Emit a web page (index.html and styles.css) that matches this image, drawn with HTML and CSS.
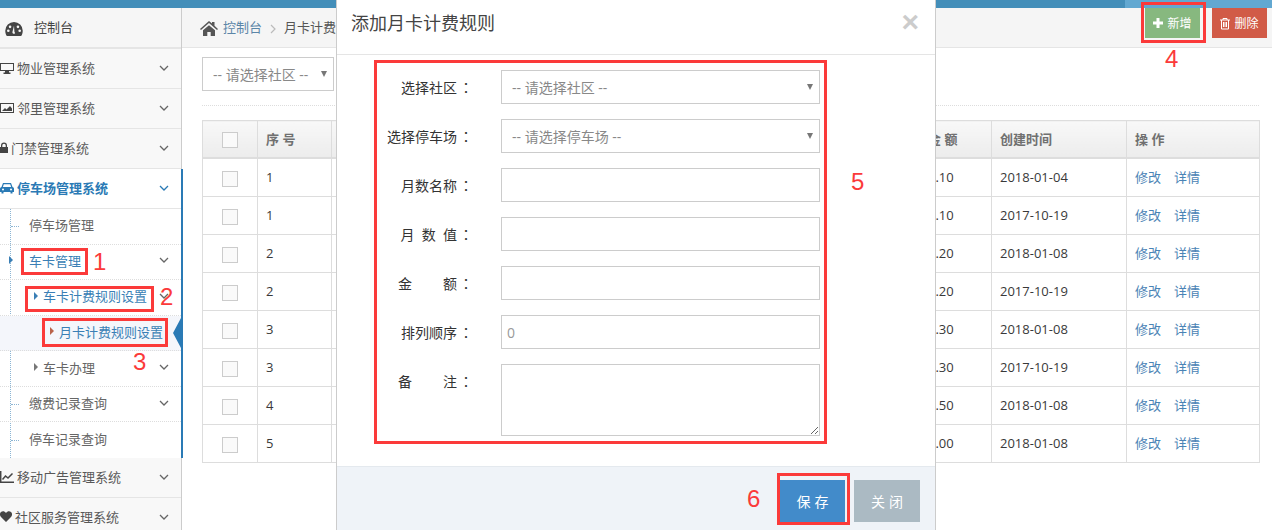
FILE: index.html
```html
<!DOCTYPE html>
<html lang="zh-CN">
<head>
  <meta charset="UTF-8">
  <meta name="viewport" content="width=device-width, initial-scale=1.0">
  <title>月卡计费规则设置</title>
  <link rel="stylesheet" href="styles.css">
</head>
<body>
  <div class="topbar">
    <div class="topbar-left"></div>
    <div class="topbar-right"></div>
  </div>

  <div class="layout">
    <aside class="sidebar">
      <div class="side-head">
        <svg class="head-icon" viewBox="0 0 20 16"><path fill="#444" fill-rule="evenodd" d="M10 0a10 10 0 0 0-10 10c0 2.300.7 4.500 1.800 6h16.400c1.100-1.500 1.800-3.700 1.800-6A10 10 0 0 0 10 0zM3.500 11.500a1.500 1.500 0 1 1 0-3 1.500 1.500 0 0 1 0 3zm2-4.500a1.500 1.500 0 1 1 0-3 1.500 1.500 0 0 1 0 3zm5.700 5.800a1.700 1.700 0 0 1-3-1.400l1.800-7 .5 7.100c.4.300.7.800.7 1.300zM14.500 7a1.500 1.500 0 1 1 0-3 1.500 1.500 0 0 1 0 3zm2 4.500a1.500 1.500 0 1 1 0-3 1.500 1.500 0 0 1 0 3z"/></svg>
        <span>控制台</span>
      </div>

      <a class="side-item" href="#">
        <svg class="icon-wide" viewBox="0 0 14 12"><path fill="#444" fill-rule="evenodd" d="M0 1h14v8H9v1.500h1.500V12h-7v-1.500H5V9H0zm1 1v6h12V2z"/></svg>
        <span>物业管理系统</span>
        <svg class="chev" viewBox="0 0 10 6"><path d="M1 1l4 4 4-4"/></svg>
      </a>
      <a class="side-item" href="#">
        <svg class="icon-wide" viewBox="0 0 14 12"><path fill="#444" fill-rule="evenodd" d="M0 1h14v10H0zm1 1v8h12V2zm1 7l3-3 1.500 1.500L10 4l2 2.500V9z"/></svg>
        <span>邻里管理系统</span>
        <svg class="chev" viewBox="0 0 10 6"><path d="M1 1l4 4 4-4"/></svg>
      </a>
      <a class="side-item" href="#">
        <svg class="icon-lock" viewBox="0 0 8 11"><path fill="#444" fill-rule="evenodd" d="M1 5V3.500a3 3 0 0 1 6 0V5h1v6H0V5zm1.300 0h3.400V3.500a1.700 1.700 0 0 0-3.400 0z"/></svg>
        <span>门禁管理系统</span>
        <svg class="chev" viewBox="0 0 10 6"><path d="M1 1l4 4 4-4"/></svg>
      </a>

      <div class="side-open">
        <a class="side-item side-item-active" href="#">
          <svg class="icon-wide" viewBox="0 0 14 12"><path fill="#2a7ab5" fill-rule="evenodd" d="M3 1h8l1.500 4c1 .3 1.500 1 1.500 2v3h-1.500v1.500h-2V10h-7v1.500h-2V10H0V7c0-1 .5-1.700 1.500-2zm.8 1.300L2.900 5h8.200l-.9-2.700zM3 6.500a1 1 0 1 0 0 2 1 1 0 0 0 0-2zm8 0a1 1 0 1 0 0 2 1 1 0 0 0 0-2z"/></svg>
          <span>停车场管理系统</span>
          <svg class="chev chev-blue" viewBox="0 0 10 6"><path d="M1 1l4 4 4-4"/></svg>
        </a>
        <ul class="tree">
          <li class="tree-row tick"><a href="#">停车场管理</a></li>
          <li class="tree-row is-blue">
            <i class="arrow arrow-l1"></i><a href="#">车卡管理</a>
            <svg class="chev" viewBox="0 0 10 6"><path d="M1 1l4 4 4-4"/></svg>
          </li>
          <li class="tree-row level-2 is-blue">
            <i class="arrow"></i><a href="#">车卡计费规则设置</a>
            <svg class="chev" viewBox="0 0 10 6"><path d="M1 1l4 4 4-4"/></svg>
          </li>
          <li class="tree-row level-3 is-blue is-current">
            <i class="arrow arrow-red"></i><a href="#">月卡计费规则设置</a>
          </li>
          <li class="tree-row level-2">
            <i class="arrow arrow-grey"></i><a href="#">车卡办理</a>
            <svg class="chev" viewBox="0 0 10 6"><path d="M1 1l4 4 4-4"/></svg>
          </li>
          <li class="tree-row tick"><a href="#">缴费记录查询</a>
            <svg class="chev" viewBox="0 0 10 6"><path d="M1 1l4 4 4-4"/></svg>
          </li>
          <li class="tree-row tick no-line"><a href="#">停车记录查询</a></li>
        </ul>
      </div>

      <a class="side-item" href="#">
        <svg class="icon-wide" viewBox="0 0 14 12"><path fill="none" stroke="#444" stroke-width="1.500" d="M.7 0v11.200H14M2.500 8.500l3-3.500 2.500 2 4.500-4.500"/></svg>
        <span>移动广告管理系统</span>
        <svg class="chev" viewBox="0 0 10 6"><path d="M1 1l4 4 4-4"/></svg>
      </a>
      <a class="side-item" href="#">
        <svg class="icon-heart" viewBox="0 0 12 11"><path fill="#444" d="M6 11L1 6C-.5 4.300-.3 2 1 1c1.500-1.200 3.700-.9 5 1 1.300-1.900 3.500-2.200 5-1 1.300 1 1.500 3.300 0 5z"/></svg>
        <span>社区服务管理系统</span>
        <svg class="chev" viewBox="0 0 10 6"><path d="M1 1l4 4 4-4"/></svg>
      </a>
    </aside>

    <main class="main">
      <div class="crumb-bar">
        <svg class="home" viewBox="0 0 18 15"><path fill="#555" d="M9 0l3 2.600V1h2.500v3.800L18 7.900l-1 1.100-8-6.900L1 9 0 7.900zM3 9.300l6-5.100 6 5.100V15h-4.300v-4H7.300v4H3z"/></svg>
        <a class="crumb-link" href="#">控制台</a>
        <svg class="crumb-sep" viewBox="0 0 6 10"><path d="M1 1l4 4-4 4"/></svg>
        <span class="crumb-now">月卡计费</span>
        <div class="crumb-btns">
          <button class="btn btn-add" type="button">
            <svg viewBox="0 0 10 10"><path fill="#fff" d="M3.500 0h3v3.500H10v3H6.500V10h-3V6.500H0v-3h3.500z"/></svg>新增
          </button>
          <button class="btn btn-del" type="button">
            <svg viewBox="0 0 10 12"><path fill="none" stroke="#fff" d="M0 2.500h10M3 2.500V1h4v1.500M1.500 2.500v9h7v-9M3.500 4.500v5M5 4.500v5M6.500 4.500v5"/></svg>删除
          </button>
        </div>
      </div>

      <div class="content">
        <div class="filter">
          <div class="select-wrap filter-select">
            <select><option>-- 请选择社区 --</option></select>
          </div>
        </div>

        <table class="grid">
          <colgroup>
            <col class="col-check"><col class="col-no"><col class="col-name"><col class="col-park"><col class="col-month"><col class="col-money"><col class="col-date"><col class="col-op">
          </colgroup>
          <thead>
            <tr>
              <th><i class="check"></i></th>
              <th>序 号</th>
              <th>月数名称</th>
              <th>停车场</th>
              <th>月数值</th>
              <th>金 额</th>
              <th>创建时间</th>
              <th>操 作</th>
            </tr>
          </thead>
          <tbody>
            <tr><td><i class="check"></i></td><td>1</td><td>一个月</td><td>一号停车场</td><td>1</td><td>0.10</td><td>2018-01-04</td><td><a href="#">修改</a><a href="#">详情</a></td></tr>
            <tr><td><i class="check"></i></td><td>1</td><td>一个月</td><td>二号停车场</td><td>1</td><td>0.10</td><td>2017-10-19</td><td><a href="#">修改</a><a href="#">详情</a></td></tr>
            <tr><td><i class="check"></i></td><td>2</td><td>两个月</td><td>一号停车场</td><td>2</td><td>0.20</td><td>2018-01-08</td><td><a href="#">修改</a><a href="#">详情</a></td></tr>
            <tr><td><i class="check"></i></td><td>2</td><td>两个月</td><td>二号停车场</td><td>2</td><td>0.20</td><td>2017-10-19</td><td><a href="#">修改</a><a href="#">详情</a></td></tr>
            <tr><td><i class="check"></i></td><td>3</td><td>三个月</td><td>一号停车场</td><td>3</td><td>0.30</td><td>2018-01-08</td><td><a href="#">修改</a><a href="#">详情</a></td></tr>
            <tr><td><i class="check"></i></td><td>3</td><td>三个月</td><td>二号停车场</td><td>3</td><td>0.30</td><td>2017-10-19</td><td><a href="#">修改</a><a href="#">详情</a></td></tr>
            <tr><td><i class="check"></i></td><td>4</td><td>半年</td><td>一号停车场</td><td>6</td><td>0.50</td><td>2018-01-08</td><td><a href="#">修改</a><a href="#">详情</a></td></tr>
            <tr><td><i class="check"></i></td><td>5</td><td>一年</td><td>一号停车场</td><td>12</td><td>1.00</td><td>2018-01-08</td><td><a href="#">修改</a><a href="#">详情</a></td></tr>
          </tbody>
        </table>
      </div>
    </main>
  </div>

  <!-- 弹窗 -->
  <div class="modal">
    <div class="modal-head">
      <h4>添加月卡计费规则</h4>
      <span class="modal-close">×</span>
    </div>
    <form class="modal-body">
      <div class="form-row">
        <label>选择社区<b>：</b></label>
        <div class="select-wrap"><select><option>-- 请选择社区 --</option></select></div>
      </div>
      <div class="form-row">
        <label>选择停车场<b>：</b></label>
        <div class="select-wrap"><select><option>-- 请选择停车场 --</option></select></div>
      </div>
      <div class="form-row">
        <label>月数名称<b>：</b></label>
        <input type="text">
      </div>
      <div class="form-row">
        <label>月&nbsp;&nbsp;数&nbsp;&nbsp;值<b>：</b></label>
        <input type="text">
      </div>
      <div class="form-row">
        <label><span class="spread">金　　</span>额<b>：</b></label>
        <input type="text">
      </div>
      <div class="form-row">
        <label>排列顺序<b>：</b></label>
        <input type="text" value="0" class="input-muted">
      </div>
      <div class="form-row form-row-area">
        <label><span class="spread">备　　</span>注<b>：</b></label>
        <textarea></textarea>
      </div>
    </form>
    <div class="modal-foot">
      <button class="btn-foot btn-save" type="button">保存</button>
      <button class="btn-foot btn-close" type="button">关闭</button>
    </div>
  </div>

  <!-- 红框标注 -->
  <div class="mark mark-box1"></div>
  <div class="mark mark-box2"></div>
  <div class="mark mark-box3"></div>
  <div class="mark mark-box4"></div>
  <div class="mark mark-box5"></div>
  <div class="mark mark-box6"></div>
  <span class="mark-no no1">1</span>
  <span class="mark-no no2">2</span>
  <span class="mark-no no3">3</span>
  <span class="mark-no no4">4</span>
  <span class="mark-no no5">5</span>
  <span class="mark-no no6">6</span>
</body>
</html>
```

FILE: styles.css
```css
:root {
  --blue: #3a7fb5;
  --line: #ddd;
  --red: #fb3a3a;
}

html, body {
  height: 100%;
  overflow: hidden;
}

body {
  margin: 0;
  position: relative;
  background: white;
  color: #444;
  font-family: "Open Sans", "Noto Sans CJK SC", sans-serif;
  font-size: 13px;
}

a {
  text-decoration: none;
  color: inherit;
}

/* 顶部 */
.topbar {
  display: flex;
  height: 8px;
}

.topbar-left {
  flex: 1;
  background: #438eb9;
}

.topbar-right {
  width: 147px;
  background: #62a8d1;
}

.layout {
  display: flex;
  height: 522px;
}

/* 左侧菜单 */
.sidebar {
  width: 181px;
  flex-shrink: 0;
  background: #f8f8f8;
  border-right: 1px solid #ccc;
}

.side-head {
  display: flex;
  align-items: center;
  height: 36px;
  padding: 0 0 3px 5px;
  border-bottom: 2px solid #e5e5e5;
  background: #f6f6f6;
}

.head-icon {
  width: 18px;
  height: 14px;
  margin-right: 11px;
  margin-top: 5px;
}

.side-item {
  display: flex;
  align-items: center;
  height: 40px;
  box-sizing: border-box;
  padding-bottom: 2px;
  border-bottom: 1px solid #e5e5e5;
  color: #585858;
}

.side-item span {
  margin-left: 3px;
}

.icon-wide {
  width: 14px;
  height: 12px;
}

.icon-lock {
  width: 8px;
  height: 11px;
}

.icon-heart {
  width: 12px;
  height: 11px;
}

.chev {
  width: 10px;
  height: 6px;
  margin-left: auto;
  margin-right: 12px;
  fill: none;
  stroke: #666;
  stroke-width: 1.300;
}

.chev-blue {
  stroke: #2a7ab5;
}

.side-open {
  background: white;
  margin-right: -2px;
  border-right: 2px solid #2a7ab5;
  height: 289px;
  position: relative;
}

.side-item-active {
  color: #2a7ab5;
  font-weight: 700;
}

.tree {
  list-style: none;
  margin: 0;
  padding: 0;
  position: relative;
}

.tree::before {
  content: "";
  position: absolute;
  left: 10px;
  top: 0;
  bottom: 0;
  border-left: 1px dotted #8bb5d4;
}

.tree-row {
  display: flex;
  align-items: center;
  height: 35.570px;
  box-sizing: border-box;
  padding: 0 0 3px 29px;
  border-bottom: 1px dotted #ddd;
  color: #666;
  position: relative;
}

.tree-row.no-line {
  border-bottom: none;
}

.tree-row.tick::before {
  content: "";
  position: absolute;
  left: 11px;
  top: 50%;
  width: 8px;
  border-top: 1px dotted #8bb5d4;
}

.level-2 {
  padding-left: 34px;
}

.level-3 {
  padding-left: 50px;
}

.is-blue {
  color: var(--blue);
}

.is-current {
  background: #f4f6fb;
}

.is-current::after {
  content: "";
  position: absolute;
  right: 0;
  top: 2px;
  border-style: solid;
  border-width: 15px 8px 15px 0;
  border-color: transparent #2a7ab5 transparent transparent;
}

.arrow {
  width: 0;
  height: 0;
  border-style: solid;
  border-width: 4px 0 4px 4px;
  border-color: transparent transparent transparent var(--blue);
  margin-right: 5px;
}

.arrow-l1 {
  position: absolute;
  left: 9px;
  margin: 0;
}

.arrow-red {
  border-left-color: #b9634a;
}

.arrow-grey {
  border-left-color: #777;
}

/* 主体 */
.main {
  flex: 1;
  min-width: 0;
  display: flex;
  flex-direction: column;
}

.crumb-bar {
  display: flex;
  align-items: flex-start;
  height: 40px;
  box-sizing: border-box;
  background: #f5f5f5;
  border-bottom: 1px solid #e5e5e5;
  padding: 0 5px 0 18px;
}

.home {
  width: 18px;
  height: 15px;
  margin-top: 13px;
  margin-right: 5px;
}

.crumb-link {
  color: #5b86a8;
  line-height: 39px;
}

.crumb-sep {
  width: 6px;
  height: 10px;
  margin: 16px 8px 0 8px;
  fill: none;
  stroke: #bbb;
  stroke-width: 1.200;
}

.crumb-now {
  line-height: 39px;
  color: #555;
}

.crumb-btns {
  display: flex;
  gap: 12px;
  margin-left: auto;
}

.btn {
  display: flex;
  align-items: center;
  justify-content: center;
  gap: 4px;
  width: 55px;
  height: 30px;
  border: none;
  padding: 0;
  color: white;
  font-family: inherit;
  font-size: 12px;
}

.btn svg {
  width: 10px;
  height: 10px;
}

.btn-del svg {
  height: 13px;
}

.btn-add {
  background: #87b87f;
}

.btn-del {
  background: #d15b47;
}

.content {
  padding: 9px 13px 0 20px;
}

.filter {
  height: 48px;
  border-bottom: 1px dotted #ddd;
  margin-bottom: 14px;
}

.select-wrap {
  position: relative;
  flex: 1;
}

.select-wrap::after {
  content: "";
  position: absolute;
  right: 7px;
  top: 14px;
  border-style: solid;
  border-width: 6px 3px 0;
  border-color: #777 transparent transparent;
}

.select-wrap select {
  appearance: none;
  display: block;
  width: 100%;
  height: 34px;
  box-sizing: border-box;
  padding: 0 0 0 10px;
  border: 1px solid #ccc;
  border-radius: 0;
  background: white;
  color: #888;
  font-family: inherit;
  font-size: 14px;
}

.filter-select {
  width: 132px;
}

/* 表格 */
.grid {
  width: 1057px;
  table-layout: fixed;
  border-collapse: collapse;
}

.col-check { width: 55px; }
.col-no { width: 74px; }
.col-name { width: 200px; }
.col-park { width: 240px; }
.col-month { width: 148px; }
.col-money { width: 72px; }
.col-date { width: 135px; }
.col-op { width: 133px; }

.grid th, .grid td {
  border: 1px solid var(--line);
  padding: 0 8px 2px;
  text-align: left;
  white-space: nowrap;
  overflow: hidden;
}

.grid th {
  height: 34px;
  background: linear-gradient(#f8f8f8, #ececec);
  border-bottom: 2px solid var(--line);
  color: #707070;
  font-weight: 700;
}

.grid td {
  height: 35px;
  color: #393939;
}

.grid th:first-child, .grid td:first-child {
  text-align: center;
  padding: 0;
}

.grid td a {
  color: #4a83b5;
  margin-right: 13px;
}

.check {
  display: inline-block;
  vertical-align: middle;
  width: 14px;
  height: 14px;
  border: 1px solid #ccc;
  background: #fafafa;
}

/* 弹窗 */
.modal {
  position: absolute;
  left: 336px;
  top: 0;
  width: 598px;
  height: 530px;
  display: flex;
  flex-direction: column;
  background: white;
  border-left: 1px solid #ccc;
  border-right: 1px solid #ccc;
}

.modal-head {
  height: 55px;
  flex-shrink: 0;
  display: flex;
  justify-content: space-between;
  align-items: center;
  padding: 0 16px 10px 14px;
  box-sizing: border-box;
  border-bottom: 1px solid #e5e5e5;
}

.modal-head h4 {
  margin: 0;
  font-size: 18px;
  font-weight: 400;
  color: #444;
}

.modal-close {
  font-family: "Liberation Sans", sans-serif;
  font-size: 30px;
  font-weight: 700;
  color: #ccc;
}

.modal-body {
  flex: 1;
  display: flex;
  flex-direction: column;
  gap: 15px;
  padding: 15px 115px 0 0;
}

.form-row {
  display: flex;
  align-items: center;
  height: 34px;
}

.form-row label {
  width: 134px;
  margin-right: 30px;
  text-align: right;
  font-size: 14px;
  color: #333;
}

.form-row label b {
  display: inline-block;
  padding-left: 2px;
  margin-right: -2px;
  font-family: "Noto Sans CJK TC", sans-serif;
  font-weight: 400;
}

.spread {
  letter-spacing: 1px;
}

.form-row input {
  flex: 1;
  min-width: 0;
  height: 34px;
  box-sizing: border-box;
  border: 1px solid #ccc;
  padding: 0 5px;
  font-family: inherit;
  font-size: 14px;
}

.input-muted {
  color: #999;
}

.form-row-area {
  height: 72px;
  align-items: flex-start;
}

.form-row-area label {
  padding-top: 7px;
}

.form-row-area textarea {
  flex: 1;
  height: 72px;
  box-sizing: border-box;
  border: 1px solid #ccc;
  margin: 0;
}

.modal-foot {
  height: 64px;
  flex-shrink: 0;
  box-sizing: border-box;
  display: flex;
  justify-content: flex-end;
  gap: 9px;
  padding: 13px 15px 0 0;
  background: #eff3f8;
  border-top: 1px solid #e4e9ee;
}

.btn-foot {
  width: 65px;
  height: 42px;
  border: none;
  padding: 0 0 0 4px;
  color: white;
  font-family: inherit;
  font-size: 14px;
  letter-spacing: 4px;
}

.btn-save {
  background: #428bca;
}

.btn-close {
  width: 66px;
  background: #abbac3;
}

/* 红框标注 */
.mark {
  position: absolute;
  border: 3px solid var(--red);
  box-sizing: border-box;
}

.mark-box1 { left: 21px; top: 248px; width: 67px; height: 27px; }
.mark-box2 { left: 25px; top: 286px; width: 129px; height: 26px; }
.mark-box3 { left: 42px; top: 318px; width: 126px; height: 29px; }
.mark-box4 { left: 1141px; top: 2px; width: 65px; height: 41px; }
.mark-box5 { left: 374px; top: 60px; width: 453px; height: 384px; }
.mark-box6 { left: 777px; top: 473px; width: 73px; height: 52px; }

.mark-no {
  position: absolute;
  color: var(--red);
  font-family: "Liberation Sans", sans-serif;
  font-size: 24px;
  line-height: 24px;
}

.no1 { left: 93px; top: 250px; }
.no2 { left: 160px; top: 285px; }
.no3 { left: 133px; top: 350px; }
.no4 { left: 1165px; top: 47px; }
.no5 { left: 851px; top: 170px; }
.no6 { left: 747px; top: 487px; }
```
